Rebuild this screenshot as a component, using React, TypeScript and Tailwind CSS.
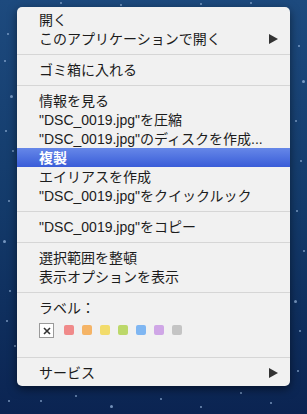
import React from 'react';

const stars: [number, number, number][] = [
  [7, 33, 2], [4, 60, 2], [10, 95, 3], [5, 130, 2], [12, 150, 2], [8, 200, 2], [3, 240, 3],
  [9, 290, 2], [6, 320, 2], [14, 345, 2], [8, 400, 2], [298, 45, 2], [302, 80, 3], [295, 120, 2],
  [300, 160, 2], [296, 210, 2], [303, 250, 2], [294, 300, 3], [299, 330, 2], [297, 370, 2],
  [40, 400, 2], [75, 395, 2], [110, 405, 3], [160, 398, 2], [200, 406, 2], [240, 392, 2], [270, 402, 2],
  [60, 2, 2], [120, 4, 2], [200, 3, 2], [250, 2, 2],
];

const swatches = ['#f08a8a', '#f5b466', '#f2dc6c', '#bcd86a', '#7fb6f2', '#cfa6e6', '#c4c4c4'];

const Row = ({ label, arrow, active }: { label: string; arrow?: boolean; active?: boolean }) => (
  <div
    className={`h-[19px] flex items-center justify-between pl-[22px] pr-[12px] whitespace-nowrap ${
      active ? 'bg-gradient-to-b from-[#6687e8] to-[#3a5cd8] text-white font-bold' : 'text-[#1c1c1c]'
    }`}
  >
    <span className="leading-none">{label}</span>
    {arrow && (
      <svg width="9" height="10" viewBox="0 0 9 10">
        <path d="M0 0 L9 5 L0 10 Z" fill="#333" />
      </svg>
    )}
  </div>
);

const Sep = () => (
  <div className="h-[12px] flex items-center">
    <div className="w-full h-px bg-[#d6d6d6]" />
  </div>
);

export default function App() {
  return (
    <div
      className="relative w-[307px] h-[414px] overflow-hidden bg-gradient-to-b from-[#1d4a7e] via-[#133a6a] to-[#0b2452] pt-[7px] pl-[17px]"
      style={{ fontFamily: '"Liberation Sans", "Noto Sans CJK JP", sans-serif' }}
    >
      {stars.map(([x, y, s], i) => (
        <span
          key={i}
          className="absolute rounded-full bg-[#9fbfe6] opacity-70"
          style={{ left: x, top: y, width: s, height: s }}
        />
      ))}
      <div className="relative w-[273px] rounded-[5px] bg-[#f1f1f1] shadow-[0_3px_10px_rgba(0,0,0,0.5)] pt-[3px] pb-[4px] text-[14px]">
        <Row label="開く" />
        <Row label="このアプリケーションで開く" arrow />
        <Sep />
        <Row label="ゴミ箱に入れる" />
        <Sep />
        <Row label="情報を見る" />
        <Row label={'"DSC_0019.jpg"を圧縮'} />
        <Row label={'"DSC_0019.jpg"のディスクを作成...'} />
        <Row label="複製" active />
        <Row label="エイリアスを作成" />
        <Row label={'"DSC_0019.jpg"をクイックルック'} />
        <Sep />
        <Row label={'"DSC_0019.jpg"をコピー'} />
        <Sep />
        <Row label="選択範囲を整頓" />
        <Row label="表示オプションを表示" />
        <Sep />
        <Row label="ラベル：" />
        <div className="h-[34px] pl-[22px] pt-[6px] flex items-start gap-[10px]">
          <div className="w-[15px] h-[15px] border border-[#9a9a9a] bg-white flex items-center justify-center">
            <svg width="8" height="8" viewBox="0 0 8 8">
              <path d="M1 1 L7 7 M7 1 L1 7" stroke="#333" strokeWidth="1.6" />
            </svg>
          </div>
          <div className="flex gap-[8px] pt-[2px]">
            {swatches.map((c) => (
              <div key={c} className="w-[10px] h-[10px] rounded-[2px]" style={{ backgroundColor: c }} />
            ))}
          </div>
        </div>
        <Sep />
        <Row label="サービス" arrow />
      </div>
    </div>
  );
}
